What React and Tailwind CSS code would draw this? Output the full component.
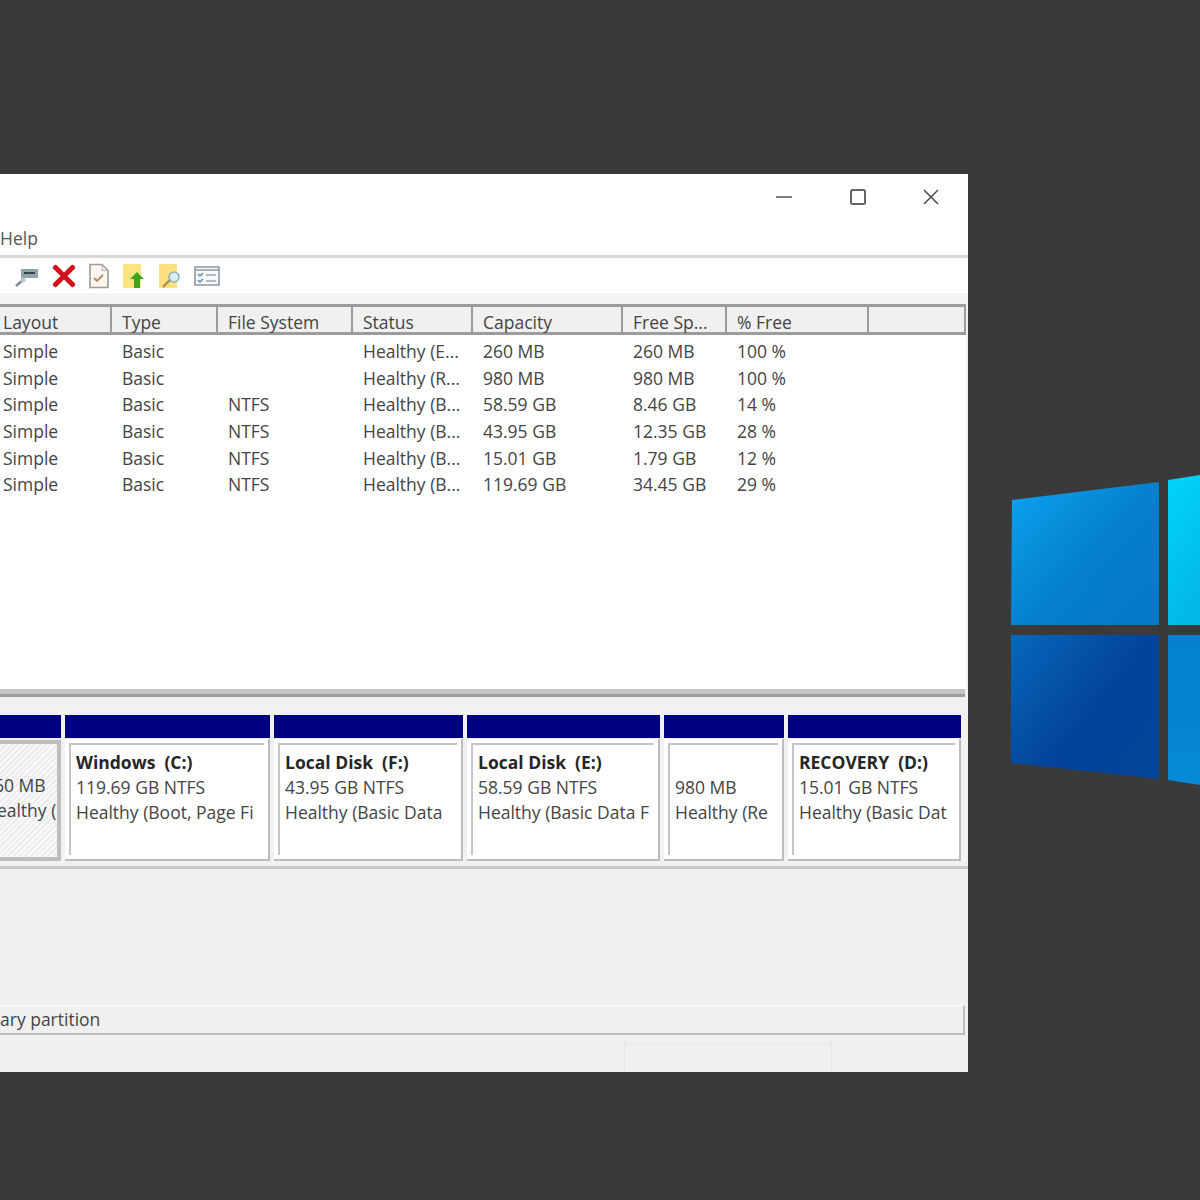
const columns = [
  { label: 'Layout', width: 'w-[112px]', pad: 'pl-[3px]' },
  { label: 'Type', width: 'w-[106px]', pad: 'pl-[10px]' },
  { label: 'File System', width: 'w-[135px]', pad: 'pl-[10px]' },
  { label: 'Status', width: 'w-[120px]', pad: 'pl-[10px]' },
  { label: 'Capacity', width: 'w-[150px]', pad: 'pl-[10px]' },
  { label: 'Free Sp...', width: 'w-[104px]', pad: 'pl-[10px]' },
  { label: '% Free', width: 'w-[142px]', pad: 'pl-[10px]' },
  { label: '', width: 'w-[97px]', pad: 'pl-[10px]' },
];

const rows = [
  ['Simple', 'Basic', '', 'Healthy (E...', '260 MB', '260 MB', '100 %'],
  ['Simple', 'Basic', '', 'Healthy (R...', '980 MB', '980 MB', '100 %'],
  ['Simple', 'Basic', 'NTFS', 'Healthy (B...', '58.59 GB', '8.46 GB', '14 %'],
  ['Simple', 'Basic', 'NTFS', 'Healthy (B...', '43.95 GB', '12.35 GB', '28 %'],
  ['Simple', 'Basic', 'NTFS', 'Healthy (B...', '15.01 GB', '1.79 GB', '12 %'],
  ['Simple', 'Basic', 'NTFS', 'Healthy (B...', '119.69 GB', '34.45 GB', '29 %'],
];

const volumes = [
  { width: 'w-[205px]', name: 'Windows  (C:)', size: '119.69 GB NTFS', status: 'Healthy (Boot, Page Fi' },
  { width: 'w-[189px]', name: 'Local Disk  (F:)', size: '43.95 GB NTFS', status: 'Healthy (Basic Data' },
  { width: 'w-[193px]', name: 'Local Disk  (E:)', size: '58.59 GB NTFS', status: 'Healthy (Basic Data F' },
  { width: 'w-[120px]', name: '', size: '980 MB', status: 'Healthy (Re' },
  { width: 'w-[173px]', name: 'RECOVERY  (D:)', size: '15.01 GB NTFS', status: 'Healthy (Basic Dat' },
];

const DiskIcon = () => (
  <svg width="26" height="24" viewBox="0 0 26 24">
    <path d="M7 5h17v9H7z" fill="#8fa3ad" />
    <path d="M10 9h11" stroke="#33474f" strokeWidth="2" />
    <path d="M2 22l8-7" stroke="#7b8e99" strokeWidth="2.5" />
    <circle cx="9" cy="16" r="2.5" fill="#b9c6cc" />
  </svg>
);

const DeleteIcon = () => (
  <svg width="24" height="24" viewBox="0 0 24 24">
    <path d="M3.5 3.5l17 17M20.5 3.5l-17 17" stroke="#d4101c" strokeWidth="5" strokeLinecap="round" />
  </svg>
);

const CheckDocIcon = () => (
  <svg width="22" height="26" viewBox="0 0 22 26">
    <path d="M2 1.5h12l6 6v17H2z" fill="#fbf7f0" stroke="#9a9a9a" strokeWidth="1.6" />
    <path d="M14 1.5v6h6" fill="none" stroke="#b0b0b0" />
    <path d="M6 15l3 3 6-6" fill="none" stroke="#b98a58" strokeWidth="1.8" />
  </svg>
);

const UpFolderIcon = () => (
  <svg width="24" height="26" viewBox="0 0 24 26">
    <path d="M1 1h18v24H1z" fill="#fce57e" />
    <path d="M15 9l7 7h-4v9h-6v-9H8z" fill="#3fa31d" />
  </svg>
);

const SearchFolderIcon = () => (
  <svg width="24" height="26" viewBox="0 0 24 26">
    <path d="M1 1h18v24H1z" fill="#fcdf80" />
    <path d="M5 24l8-8" stroke="#a98a58" strokeWidth="2.4" />
    <circle cx="16" cy="14" r="5" fill="#dbeef5" stroke="#8fb1bf" strokeWidth="1.6" />
  </svg>
);

const ChecklistIcon = () => (
  <svg width="26" height="22" viewBox="0 0 26 22">
    <path d="M1 2h24v18H1z" fill="#f6f8fa" stroke="#8d98a3" strokeWidth="1.6" />
    <path d="M1 5h24" stroke="#8d98a3" strokeWidth="1.5" />
    <path d="M4 9l2 2 3-3M4 15l2 2 3-3" fill="none" stroke="#5b86ad" strokeWidth="1.4" />
    <path d="M12 10h10M12 16h10" stroke="#9aa5ae" strokeWidth="1.3" />
  </svg>
);

const WindowsLogo = () => (
  <svg className="mt-[470px] ml-[42px] shrink-0" width="190" height="320" viewBox="0 0 190 320">
    <defs>
      <linearGradient id="paneTopLeft" x1="0" y1="0" x2="1" y2="0.9">
        <stop offset="0" stopColor="#0ca4f0" />
        <stop offset="0.55" stopColor="#0480cd" />
        <stop offset="1" stopColor="#0578c6" />
      </linearGradient>
      <linearGradient id="paneBottomLeft" x1="0" y1="0" x2="1" y2="0.8">
        <stop offset="0" stopColor="#0668bb" />
        <stop offset="0.6" stopColor="#03439a" />
        <stop offset="1" stopColor="#04459a" />
      </linearGradient>
      <linearGradient id="paneTopRight" x1="0" y1="0" x2="0.3" y2="1">
        <stop offset="0" stopColor="#00d5fd" />
        <stop offset="1" stopColor="#02b8ea" />
      </linearGradient>
      <linearGradient id="paneBottomRight" x1="0" y1="0" x2="0" y2="1">
        <stop offset="0" stopColor="#0480cf" />
        <stop offset="1" stopColor="#0589d6" />
      </linearGradient>
    </defs>
    <path d="M2 30L149 12v143H1z" fill="url(#paneTopLeft)" />
    <path d="M1 165h148v144L1 293z" fill="url(#paneBottomLeft)" />
    <path d="M158 10l32-5v150h-32z" fill="url(#paneTopRight)" />
    <path d="M158 165h32v150l-32-5z" fill="url(#paneBottomRight)" />
  </svg>
);

const App = () => {
  return (
    <div
      className="flex items-start w-[1200px] h-[1200px] overflow-hidden bg-[#3a3a3a] text-[#444444] text-[17.5px] leading-[24px]"
      style={{ fontFamily: '"Open Sans", "Noto Sans", sans-serif' }}
    >
      <div className="flex flex-col mt-[174px] w-[968px] h-[898px] shrink-0 bg-[#f0f0f0] overflow-hidden">
        {/* title bar */}
        <div className="flex justify-end items-start h-[54px] bg-white pt-[15px] pr-[29px] gap-[57px]">
          <svg width="18" height="16" viewBox="0 0 18 16">
            <path d="M1 8h16" stroke="#555555" strokeWidth="1.5" />
          </svg>
          <svg width="16" height="16" viewBox="0 0 16 16">
            <rect x="1" y="1" width="14" height="14" rx="1.5" fill="none" stroke="#666666" strokeWidth="2" />
          </svg>
          <svg width="16" height="16" viewBox="0 0 16 16">
            <path d="M1 1l14 14M15 1L1 15" stroke="#4a4a4a" strokeWidth="1.5" />
          </svg>
        </div>

        {/* menu */}
        <div className="h-[30px] bg-white border-b-[3px] border-[#d9d9d9] text-[#555555]">
          <span className="block -mt-[2px]">Help</span>
        </div>

        {/* toolbar */}
        <div className="flex items-center h-[35px] pl-[14px] gap-[12px] bg-white">
          <DiskIcon />
          <DeleteIcon />
          <CheckDocIcon />
          <UpFolderIcon />
          <SearchFolderIcon />
          <ChecklistIcon />
        </div>
        <div className="h-[11px] bg-[#f4f4f4]" />

        {/* volume list */}
        <div className="flex flex-col w-[966px] h-[385px] bg-white">
          <div className="flex h-[31px] bg-[#f0f0f0] border-y-[3px] border-[#9c9c9c]">
            {columns.map((col) => (
              <div key={col.label} className={`${col.width} ${col.pad} border-r-[2px] border-[#9c9c9c] pt-[3px] whitespace-nowrap`}>
                {col.label}
              </div>
            ))}
          </div>
          <div className="pt-[3px]">
            {rows.map((row, i) => (
              <div key={i} className="flex h-[26.6px] items-center whitespace-nowrap">
                {row.map((cell, j) => (
                  <div key={j} className={`${columns[j].width} ${columns[j].pad}`}>
                    {cell}
                  </div>
                ))}
              </div>
            ))}
          </div>
        </div>

        {/* splitter */}
        <div className="w-[965px] h-[8px] bg-[#c4c4c4] border-b-[3px] border-[#9e9e9e]" />

        {/* disk graphic */}
        <div className="flex gap-[4px] h-[172px] w-[968px] pt-[18px] border-b-[3px] border-[#c8c8c8] bg-[#f1f1f1]">
          <div className="flex flex-col w-[61px] h-[146px]">
            <div className="h-[23px] bg-[#000080]" />
            <div className="flex-1 mt-[2px] border-[4px] border-l-0 border-[#bdbdbd] bg-[repeating-linear-gradient(135deg,#ececec_0px,#ececec_2px,#fafafa_2px,#fafafa_4px)] overflow-hidden">
              <div className="-ml-[16px] pt-[29px] leading-[25px] whitespace-nowrap">
                <div>260 MB</div>
                <div>Healthy (EFI</div>
              </div>
            </div>
          </div>
          {volumes.map((vol) => (
            <div key={vol.status} className={`flex flex-col h-[146px] ${vol.width}`}>
              <div className="h-[23px] bg-[#000080]" />
              <div className="flex-1 mt-[1px] p-[4px] bg-white border-r-[2px] border-b-[2px] border-[#bcbcbc]">
                <div className="h-full pl-[5px] pt-[5px] border-l-[2px] border-t-[2px] border-[#c4c4cc] leading-[25px] whitespace-pre overflow-hidden">
                  <div className="h-[25px] font-bold text-[#262626]">{vol.name}</div>
                  <div>{vol.size}</div>
                  <div>{vol.status}</div>
                </div>
              </div>
            </div>
          ))}
        </div>

        <div className="h-[136px]" />

        {/* legend */}
        <div className="flex items-center w-[965px] h-[30px] border-t border-r-[2px] border-b-[2px] border-t-white border-[#bdbdbd] text-[#444444]">
          <span className="-mt-[2px]">ary partition</span>
        </div>

        {/* status bar */}
        <div className="flex flex-1 justify-end pt-[8px]">
          <div className="w-[208px] border-x border-t border-[#e6e6e6]" />
          <div className="w-[136px]" />
        </div>
      </div>
      <WindowsLogo />
    </div>
  );
};

export default App;
